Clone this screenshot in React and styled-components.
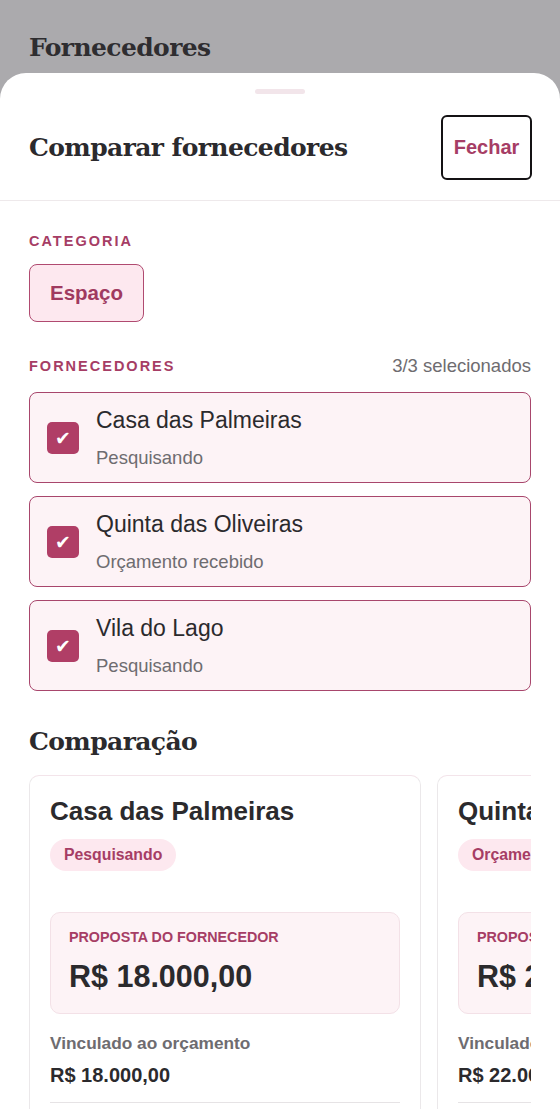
import { createGlobalStyle, styled } from "styled-components";

const GlobalStyle = createGlobalStyle`
  html, body {
    margin: 0;
    padding: 0;
    background: #abaaad;
  }
  * {
    box-sizing: border-box;
  }
  body {
    font-family: "Liberation Sans", Arial, sans-serif;
    color: #2b2a2d;
  }
`;

const serif = `"DejaVu Serif", "Liberation Serif", serif`;

const Page = styled.div`
  height: 1109px;
  display: flex;
  flex-direction: column;
  overflow: hidden;
`;

const BackTitle = styled.h1`
  flex: none;
  margin: 0;
  padding: 33px 29px 0;
  height: 73px;
  font-family: ${serif};
  font-size: 25px;
  font-weight: 700;
  letter-spacing: -0.6px;
  color: #2e2d30;
`;

const Sheet = styled.div`
  flex: 1;
  min-height: 0;
  background: #fff;
  border-radius: 26px 26px 0 0;
  display: flex;
  flex-direction: column;
  overflow: hidden;

  & > * {
    flex-shrink: 0;
  }
`;

const Handle = styled.div`
  width: 50px;
  height: 5px;
  border-radius: 3px;
  background: #f2e5ea;
  margin: 16px auto 0;
`;

const SheetHeader = styled.div`
  display: flex;
  align-items: center;
  justify-content: space-between;
  padding: 0 28px 0 29px;
  height: 107px;
  border-bottom: 1px solid #eee9eb;
`;

const SheetTitle = styled.h2`
  margin: 0;
  font-family: ${serif};
  font-size: 25px;
  font-weight: 700;
  letter-spacing: -0.6px;
  color: #2b2a2d;
`;

const CloseButton = styled.button`
  width: 91px;
  height: 65px;
  border: 2.5px solid #141214;
  border-radius: 6px;
  background: #fff;
  color: #a63d65;
  font-family: "Liberation Sans", Arial, sans-serif;
  font-size: 20px;
  font-weight: 700;
  cursor: pointer;
`;

const Body = styled.div`
  padding: 32px 29px 0;
  display: flex;
  flex-direction: column;
`;

const SectionLabel = styled.div`
  font-size: 14.5px;
  font-weight: 700;
  letter-spacing: 2px;
  color: #a63d65;
  text-transform: uppercase;
`;

const LabelRow = styled.div`
  display: flex;
  justify-content: space-between;
  align-items: center;
  margin-top: ${({ $top }) => $top || 0}px;
`;

const Counter = styled.span`
  font-size: 18.5px;
  color: #6e6c70;
`;

const Chip = styled.div`
  align-self: flex-start;
  margin-top: 15px;
  padding: 0 20px;
  height: 58px;
  display: flex;
  align-items: center;
  background: #fde8ef;
  border: 1.5px solid #b04a70;
  border-radius: 8px;
  color: #a03a60;
  font-size: 20.5px;
  font-weight: 700;
`;

const SupplierList = styled.div`
  display: flex;
  flex-direction: column;
  gap: 13px;
  margin-top: 15px;
`;

const SupplierRow = styled.label`
  display: flex;
  align-items: center;
  gap: 17px;
  height: 91px;
  padding: 0 17px;
  background: #fdf3f6;
  border: 1.5px solid #a8466c;
  border-radius: 8px;
`;

const Check = styled.span`
  width: 32px;
  height: 32px;
  flex: none;
  border-radius: 5px;
  background: #b03e66;
  color: #fff;
  display: flex;
  align-items: center;
  justify-content: center;
  font-family: "DejaVu Sans", sans-serif;
  font-size: 19px;
  font-weight: 700;
`;

const SupplierText = styled.div`
  display: flex;
  flex-direction: column;
  gap: 13px;
`;

const SupplierName = styled.span`
  font-size: 23px;
  color: #2b2a2d;
`;

const SupplierStatus = styled.span`
  font-size: 18.5px;
  color: #6e6c70;
`;

const CompareTitle = styled.h3`
  margin: 36px 0 0;
  font-family: ${serif};
  font-size: 25px;
  font-weight: 700;
  letter-spacing: -0.6px;
  color: #2b2a2d;
`;

const CardStrip = styled.div`
  margin-top: 19px;
  display: flex;
  gap: 16px;
  overflow: hidden;
`;

const Card = styled.div`
  flex: none;
  width: 392px;
  padding: 20px 20px 0;
  border: 1px solid #ebe8ea;
  border-top-color: #f3e4ea;
  border-radius: 10px;
  background: #fff;
  height: 400px;
`;

const CardTitle = styled.div`
  font-size: 26px;
  font-weight: 700;
  color: #2b2a2d;
  white-space: nowrap;
`;

const Badge = styled.span`
  display: inline-flex;
  align-items: center;
  margin-top: 12px;
  height: 32px;
  padding: 0 14px;
  border-radius: 16px;
  background: #fde8ef;
  color: #a63d65;
  font-size: 15.8px;
  font-weight: 700;
  white-space: nowrap;
`;

const Proposal = styled.div`
  margin-top: 41px;
  padding: 16px 18px 19px;
  background: #fdf3f6;
  border: 1px solid #f3e1e7;
  border-radius: 10px;
`;

const ProposalLabel = styled.div`
  font-size: 14.3px;
  font-weight: 700;
  color: #a63d65;
  white-space: nowrap;
`;

const ProposalValue = styled.div`
  margin-top: 14px;
  font-size: 30.5px;
  font-weight: 700;
  color: #2b2a2d;
  white-space: nowrap;
`;

const InfoLabel = styled.div`
  margin-top: 19px;
  font-size: 17.3px;
  font-weight: 700;
  color: #6e6c70;
  white-space: nowrap;
`;

const InfoValue = styled.div`
  margin-top: 10px;
  font-size: 20px;
  font-weight: 700;
  color: #2b2a2d;
  white-space: nowrap;
  padding-bottom: 15px;
  border-bottom: 1px solid #e6e3e5;
`;

const suppliers = [
  { name: "Casa das Palmeiras", status: "Pesquisando", value: "R$ 18.000,00" },
  { name: "Quinta das Oliveiras", status: "Orçamento recebido", value: "R$ 22.000,00" },
  { name: "Vila do Lago", status: "Pesquisando", value: "R$ 15.000,00" },
];

export default function App() {
  return (
    <>
      <GlobalStyle />
      <Page>
        <BackTitle>Fornecedores</BackTitle>
        <Sheet>
          <Handle />
          <SheetHeader>
            <SheetTitle>Comparar fornecedores</SheetTitle>
            <CloseButton>Fechar</CloseButton>
          </SheetHeader>
          <Body>
            <SectionLabel>Categoria</SectionLabel>
            <Chip>Espaço</Chip>
            <LabelRow $top={33}>
              <SectionLabel>Fornecedores</SectionLabel>
              <Counter>3/3 selecionados</Counter>
            </LabelRow>
            <SupplierList>
              {suppliers.map((s) => (
                <SupplierRow key={s.name}>
                  <Check>✔</Check>
                  <SupplierText>
                    <SupplierName>{s.name}</SupplierName>
                    <SupplierStatus>{s.status}</SupplierStatus>
                  </SupplierText>
                </SupplierRow>
              ))}
            </SupplierList>
            <CompareTitle>Comparação</CompareTitle>
            <CardStrip>
              {suppliers.map((s) => (
                <Card key={s.name}>
                  <CardTitle>{s.name}</CardTitle>
                  <Badge>{s.status}</Badge>
                  <Proposal>
                    <ProposalLabel>PROPOSTA DO FORNECEDOR</ProposalLabel>
                    <ProposalValue>{s.value}</ProposalValue>
                  </Proposal>
                  <InfoLabel>Vinculado ao orçamento</InfoLabel>
                  <InfoValue>{s.value}</InfoValue>
                </Card>
              ))}
            </CardStrip>
          </Body>
        </Sheet>
      </Page>
    </>
  );
}
